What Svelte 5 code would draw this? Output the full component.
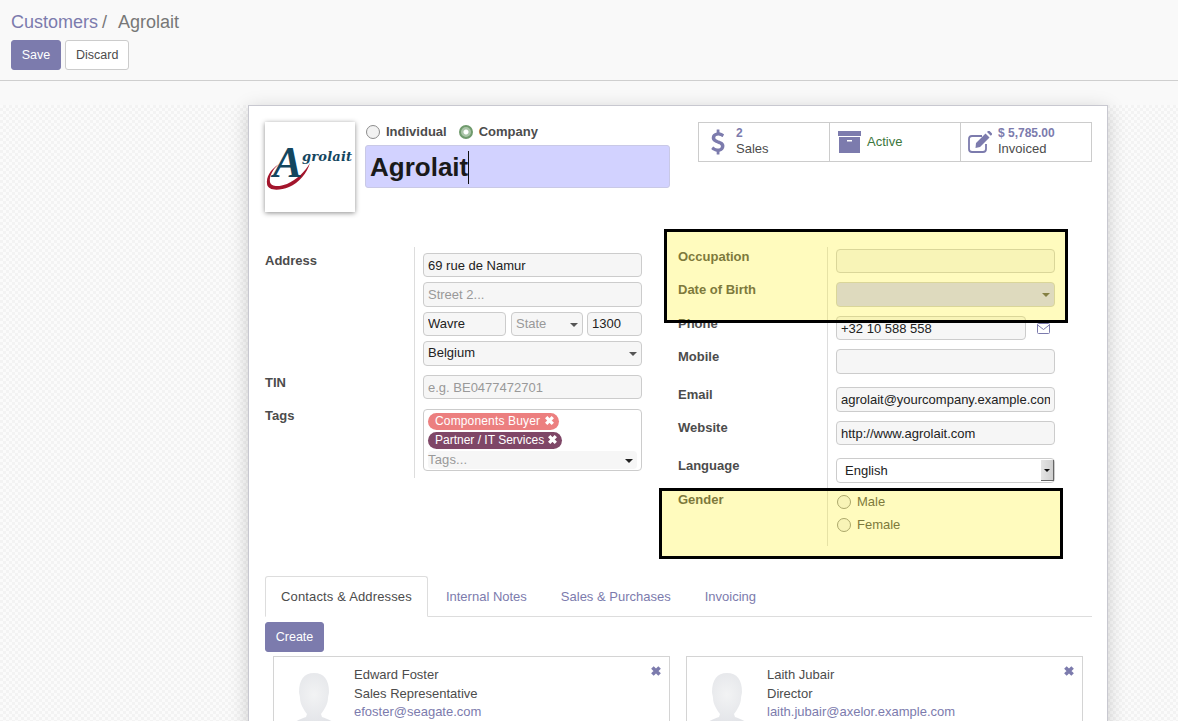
<script>
	const contacts = [
		{ name: 'Edward Foster', role: 'Sales Representative', email: 'efoster@seagate.com' },
		{ name: 'Laith Jubair', role: 'Director', email: 'laith.jubair@axelor.example.com' }
	];
	const tabs = ['Internal Notes', 'Sales & Purchases', 'Invoicing'];
</script>

<div class="page">
	<header class="panel">
		<div class="crumbs"><a href="#top">Customers</a><span class="sep">/</span><span>Agrolait</span></div>
		<div class="actions">
			<button class="btn primary save">Save</button>
			<button class="btn">Discard</button>
		</div>
	</header>
	<div class="gap"></div>

	<main class="backdrop">
		<section class="sheet">
			<div class="head">
				<div class="logo">
					<svg width="90" height="90" viewBox="0 0 90 90">
						<path d="M14 42C5 48 1 55 2 62c1 7 12 7 22 3 10-4 18-14 21-24-5 9-14 17-23 21-8 3-16 3-17-2-1-6 3-13 9-18z" fill="#a3152c" />
						<text x="8" y="55" class="logo-a">A</text>
						<text x="37" y="39" class="logo-t">grolait</text>
					</svg>
				</div>
				<div class="title">
					<div class="types">
						<label class="radio"><i></i>Individual</label>
						<label class="radio"><i class="on"></i>Company</label>
					</div>
					<div class="name">Agrolait<b></b></div>
				</div>
				<div class="stats">
					<div class="stat">
						<svg class="ico dollar" viewBox="400 0 1000 1792"><path d="M1362 1185q0 153-99.500 263.500t-258.500 136.500v175q0 14-9 23t-23 9h-135q-13 0-22.500-9.500t-9.500-22.500v-175q-66-9-127.500-31t-101.500-44.500-74-48-46.500-37.500-17.500-18q-17-21-2-41l103-135q7-10 23-12 15-2 24 9l2 2q113 99 243 125 37 8 74 8 81 0 142.500-43t61.500-122q0-28-15-53t-33.500-42-58.500-37.500-66-32-80-32.500q-39-16-61.500-25t-61.500-26.500-62.500-31-56.500-35.500-53.500-42.500-43.500-49-35.500-58-21-66.500-8.500-78q0-138 98-242t255-134v-180q0-13 9.500-22.500t22.500-9.500h135q14 0 23 9t9 23v176q57 6 110.500 23t87 33.500 63.500 37.500 39 29 15 14q17 18 5 38l-81 146q-8 15-23 16-14 3-27-7-3-3-14.500-12t-39-26.500-58.500-32-74.500-26-85.500-11.500q-95 0-155 43t-60 111q0 26 8.500 48t29.500 41.500 39.500 33 56 31 60.500 27 70 27.500q53 20 81 31.500t76 35 75.500 42.500 62 50 53 63.500 31.500 76.500 13 94z" /></svg>
						<div class="stat-text"><strong>2</strong><span>Sales</span></div>
					</div>
					<div class="stat">
						<svg class="ico box" viewBox="0 0 23 22"><path d="M0 0h23v5H0zM1 6h21v16H1z" /><rect x="9" y="9" width="5" height="1.500" fill="#fff" /></svg>
						<div class="stat-text active">Active</div>
					</div>
					<div class="stat">
						<svg class="ico edit" viewBox="0 0 24 22">
							<path d="M14 5H4a3 3 0 0 0-3 3v10a3 3 0 0 0 3 3h11a3 3 0 0 0 3-3v-5" fill="none" stroke="#7c7bad" stroke-width="1.800" />
							<path d="M8 12 17.500 2.500l4 4L12 16l-4.500 1zM19 1l1-1q.8-.6 1.600 0l2.200 2.200q.6.800 0 1.600l-1 1z" />
						</svg>
						<div class="stat-text"><strong>$ 5,785.00</strong><span>Invoiced</span></div>
					</div>
				</div>
			</div>

			<div class="group">
				<div class="col left">
					<div class="row">
						<div class="lbl">Address</div>
						<div class="val stack">
							<input value="69 rue de Namur" />
							<input placeholder="Street 2..." />
							<div class="city">
								<input class="c1" value="Wavre" />
								<div class="sel ph c2">State</div>
								<input class="c3" value="1300" />
							</div>
							<div class="sel">Belgium</div>
						</div>
					</div>
					<div class="row">
						<div class="lbl">TIN</div>
						<div class="val"><input placeholder="e.g. BE0477472701" /></div>
					</div>
					<div class="row last">
						<div class="lbl tight">Tags</div>
						<div class="val">
							<div class="tags">
								<span class="tag red">Components Buyer <svg viewBox="0 0 10 10"><path d="M2 2l6 6M8 2l-6 6" /></svg></span>
								<span class="tag plum">Partner / IT Services <svg viewBox="0 0 10 10"><path d="M2 2l6 6M8 2l-6 6" /></svg></span>
								<div class="sel tag-input ph">Tags...</div>
							</div>
						</div>
					</div>
				</div>

				<div class="col right">
					<div class="row">
						<div class="lbl">Occupation</div>
						<div class="val"><input /></div>
					</div>
					<div class="row">
						<div class="lbl">Date of Birth</div>
						<div class="val"><div class="sel dim"></div></div>
					</div>
					<div class="row">
						<div class="lbl">Phone</div>
						<div class="val phone">
							<input value="+32 10 588 558" />
							<svg class="mail" viewBox="0 0 13 11"><path d="M1.500.500h10a1 1 0 0 1 1 1v8a1 1 0 0 1-1 1h-10a1 1 0 0 1-1-1v-8a1 1 0 0 1 1-1zM.700 2 6.500 6.500 12.300 2" /></svg>
						</div>
					</div>
					<div class="row tall">
						<div class="lbl">Mobile</div>
						<div class="val"><input /></div>
					</div>
					<div class="row">
						<div class="lbl">Email</div>
						<div class="val"><input value="agrolait@yourcompany.example.com" /></div>
					</div>
					<div class="row site">
						<div class="lbl tight">Website</div>
						<div class="val"><input value="http://www.agrolait.com" /></div>
					</div>
					<div class="row">
						<div class="lbl">Language</div>
						<div class="val">
							<div class="native">English<span class="spin"></span></div>
						</div>
					</div>
					<div class="row last">
						<div class="lbl">Gender</div>
						<div class="val genders">
							<label class="radio"><i></i>Male</label>
							<label class="radio"><i></i>Female</label>
						</div>
					</div>
				</div>
			</div>

			<nav class="tabs">
				<a class="tab current" href="#top">Contacts &amp; Addresses</a>
				{#each tabs as t}
					<a class="tab" href="#top">{t}</a>
				{/each}
			</nav>
			<button class="btn primary create">Create</button>

			<div class="cards">
				{#each contacts as c}
					<article class="card">
						<svg class="avatar" viewBox="0 0 60 80">
							<defs>
								<radialGradient id="skin" cx="50%" cy="30%" r="70%">
									<stop offset="0" stop-color="#f2f3f4" />
									<stop offset="1" stop-color="#d8dae0" />
								</radialGradient>
							</defs>
							<path d="M30 8C40 8 45 15 45 27 45 29 44 31 44 33 44 39 40 45 37 49L38 52C46 55 58 58 60 80H0C2 58 14 55 22 52L23 49C20 45 16 39 16 33 16 31 15 29 15 27 15 15 20 8 30 8z" fill="url(#skin)" />
						</svg>
						<div class="who">
							<div>{c.name}</div>
							<div>{c.role}</div>
							<a href="#top">{c.email}</a>
						</div>
						<svg class="close" viewBox="0 0 10 10"><path d="M2 2l6 6M8 2l-6 6" /></svg>
					</article>
				{/each}
			</div>
		</section>
	</main>

	<div class="mark one"></div>
	<div class="mark two"></div>
</div>

<style>
	:global(body) {
		margin: 0;
		background: #f9f9f9;
	}
	.page {
		position: relative;
		height: 721px;
		overflow: hidden;
		font: 13px/18px 'Liberation Sans', Arial, sans-serif;
		color: #4c4c4c;
	}
	a {
		color: #7c7bad;
		text-decoration: none;
	}

	.panel {
		height: 81px;
		box-sizing: border-box;
		padding: 11px 11px 0;
		border-bottom: 1px solid #cfcfcf;
		background: #f9f9f9;
	}
	.crumbs {
		font-size: 18px;
		line-height: 22px;
		color: #777;
	}
	.sep {
		margin: 0 11px 0 4px;
	}
	.actions {
		display: flex;
		gap: 4px;
		margin-top: 7px;
	}
	.btn {
		height: 30px;
		padding: 0 10px;
		border: 1px solid #ccc;
		border-radius: 3px;
		background: #fff;
		font: 12.500px 'Liberation Sans', Arial, sans-serif;
		color: #4c4c4c;
	}
	.btn.primary {
		border-color: #7c7bad;
		background: #7c7bad;
		color: #fff;
	}
	.save {
		width: 50px;
		padding: 0;
	}
	.gap {
		height: 24px;
	}

	.backdrop {
		height: 616px;
		padding-left: 248px;
		background-color: #fbfbfb;
		background-image: conic-gradient(#f3f3f3 25%, #fbfbfb 0 50%, #f3f3f3 0 75%, #fbfbfb 0);
		background-size: 6px 6px;
	}
	.sheet {
		width: 860px;
		height: 700px;
		box-sizing: border-box;
		padding: 16px 15px 0 16px;
		border: 1px solid #c8c8d0;
		background: #fff;
		box-shadow: 0 4px 18px rgba(0, 0, 0, 0.18);
	}

	.head {
		display: flex;
		height: 125px;
		align-items: flex-start;
	}
	.logo {
		width: 90px;
		height: 90px;
		flex: none;
		margin-right: 10px;
		background: #fff;
		box-shadow: 0 1px 5px rgba(0, 0, 0, 0.45);
	}
	.logo-a {
		font: italic bold 44px 'Liberation Serif', serif;
		fill: #14465f;
	}
	.logo-t {
		font: italic bold 13px 'DejaVu Serif', serif;
		letter-spacing: 0.2px;
		fill: #14465f;
	}
	.title {
		width: 305px;
		flex: none;
	}
	.types {
		display: flex;
		gap: 12px;
		height: 23px;
		padding-left: 1px;
		font-weight: bold;
		padding-top: 1px;
		box-sizing: border-box;
	}
	.radio {
		display: flex;
		align-items: center;
		gap: 6px;
		height: 18px;
	}
	.radio i {
		box-sizing: border-box;
		width: 14px;
		height: 14px;
		border: 1px solid #8c8c8c;
		border-radius: 50%;
		background: #f2f2f2;
	}
	.radio i.on {
		border: 2px solid #6f9a6c;
		background: radial-gradient(circle, #fff 0 2px, #a9c4a7 3px);
	}
	.name {
		display: flex;
		height: 43px;
		box-sizing: border-box;
		align-items: center;
		padding: 1px 0 0 4px;
		border: 1px solid #c9c9e6;
		border-radius: 3px;
		background: #d2d2ff;
		font-size: 26px;
		font-weight: bold;
		color: #1a1a1a;
	}
	.name b {
		width: 1px;
		height: 33px;
		background: #111;
	}
	.stats {
		display: flex;
		margin-left: auto;
		height: 40px;
		box-sizing: border-box;
		border: 1px solid #ccc;
	}
	.stat {
		display: flex;
		align-items: center;
		box-sizing: border-box;
		width: 131px;
		padding-left: 8px;
		border-left: 1px solid #ccc;
	}
	.stat:first-child {
		border-left: 0;
		width: 130px;
	}
	.stat:last-child {
		padding-left: 7px;
	}
	.ico {
		fill: #7c7bad;
		flex: none;
	}
	.dollar {
		width: 14px;
		height: 26px;
		margin: 0 11px 0 4px;
	}
	.box {
		width: 23px;
		height: 22px;
		margin: -1px 6px 0 0;
	}
	.edit {
		width: 24px;
		height: 22px;
		margin-right: 6px;
	}
	.stat-text {
		display: flex;
		flex-direction: column;
		line-height: 15px;
		margin-top: -2px;
	}
	.stat-text strong {
		font-size: 12px;
		color: #7c7bad;
	}
	.active {
		color: #3c763d;
	}

	.group {
		display: grid;
		grid-template-columns: 377px 377px;
		column-gap: 36px;
	}
	.row {
		display: grid;
		grid-template-columns: 149px 1fr;
	}
	.lbl {
		font-weight: bold;
		line-height: 14px;
		padding-top: 1px;
	}
	.lbl.tight {
		padding-top: 0;
	}
	.val {
		min-width: 0;
		padding: 0 0 9.100px 8px;
		border-left: 1px solid #ddd;
	}
	.left .row:first-child > .val {
		padding-top: 6px;
		padding-bottom: 9.400px;
	}
	.left .row:first-child > .lbl {
		padding-top: 7px;
	}
	.left .row:nth-child(2) > .val {
		padding-bottom: 9.600px;
	}
	.right .row:first-child > .val {
		padding-top: 2px;
	}
	.right .row:first-child > .lbl {
		padding-top: 3px;
	}
	.tall .val {
		padding-bottom: 13.600px;
	}
	.site .val {
		padding-bottom: 12.600px;
	}
	input,
	.sel {
		display: block;
		box-sizing: border-box;
		width: 100%;
		height: 24.400px;
		padding: 0 4px;
		border: 1px solid #ccc;
		border-radius: 4px;
		outline: 0;
		background: #f6f6f6;
		font: 13px/22px 'Liberation Sans', Arial, sans-serif;
		color: #222;
	}
	input::placeholder,
	.ph {
		color: #999;
	}
	.stack {
		display: flex;
		flex-direction: column;
		gap: 5px;
	}
	.city {
		display: flex;
		gap: 5px;
	}
	.c1 {
		width: 83px;
	}
	.c2 {
		width: 72px;
	}
	.c3 {
		width: 55px;
		margin-left: -1px;
	}
	.sel {
		position: relative;
	}
	.sel::after {
		content: '';
		position: absolute;
		right: 4px;
		top: 10px;
		border: 4px solid transparent;
		border-top-color: #555;
		border-bottom: 0;
	}
	.dim {
		background: #d2d2ff;
	}
	.last .val {
		padding-bottom: 7px;
	}
	.tags {
		box-sizing: border-box;
		height: 62px;
		padding: 3px 4px;
		border: 1px solid #ccc;
		border-radius: 4px;
		font-size: 12px;
		letter-spacing: 0.15px;
	}
	.tag {
		display: table;
		height: 17px;
		margin-bottom: 2px;
		padding: 0 4px 0 7px;
		border-radius: 9px;
		line-height: 17px;
		color: #fff;
	}
	.tag svg {
		width: 11px;
		height: 11px;
		vertical-align: -1px;
		fill: none;
		stroke: #fff;
		stroke-width: 3;
	}
	.red {
		background: #ec7f7f;
	}
	.plum {
		background: #7f4767;
		letter-spacing: 0;
	}
	.tag-input {
		height: 18px;
		padding: 0;
		border: 0;
		line-height: 18px;
		font-size: 13px;
	}
	.tag-input::after {
		top: 8px;
		border-top-color: #222;
	}
	.phone {
		display: flex;
		align-items: center;
		gap: 11px;
	}
	.phone input {
		width: 190px;
		flex: none;
	}
	.mail {
		width: 13px;
		height: 11px;
		fill: none;
		stroke: #7c7bad;
	}
	.native {
		position: relative;
		box-sizing: border-box;
		height: 25px;
		padding-left: 8px;
		border: 1px solid #ccc;
		border-radius: 4px;
		background: #fff;
		font-size: 13px;
		line-height: 24px;
		color: #222;
	}
	.spin {
		position: absolute;
		top: 1px;
		right: 0;
		width: 13px;
		height: 21px;
		background: linear-gradient(90deg, #e4e4e4, #cfcfcf);
		border-right: 1px solid #666;
		border-bottom: 1px solid #666;
		box-sizing: border-box;
	}
	.spin::after {
		content: '';
		position: absolute;
		left: 3px;
		top: 9px;
		border: 3px solid transparent;
		border-top-color: #111;
		border-bottom: 0;
	}
	.last .genders {
		padding: 1px 0 7px 9px;
	}
	.genders .radio {
		margin-bottom: 5px;
	}
	.genders i {
		background: #f6f6f6;
	}

	.tabs {
		display: flex;
		height: 41px;
		margin-top: 30px;
		border-bottom: 1px solid #ddd;
		box-sizing: border-box;
	}
	.tab {
		height: 41px;
		box-sizing: border-box;
		margin-right: 2px;
		padding: 11px 15px;
		border: 1px solid transparent;
		border-radius: 3px 3px 0 0;
	}
	.tab.current {
		border-color: #ddd #ddd #fff;
		background: #fff;
		color: #4c4c4c;
		letter-spacing: 0.15px;
	}
	.create {
		display: block;
		margin-top: 5px;
		width: 59px;
		padding: 0;
	}
	.cards {
		display: grid;
		grid-template-columns: 397px 397px;
		column-gap: 16px;
		margin: 4px 0 0 8px;
	}
	.card {
		display: flex;
		height: 90px;
		box-sizing: border-box;
		padding: 9px 7px 0 10px;
		border: 1px solid #d4d4d4;
	}
	.avatar {
		width: 60px;
		height: 80px;
		flex: none;
		margin: -1px 10px 0 0;
	}
	.who {
		flex: 1;
		line-height: 18.500px;
	}
	.who a {
		display: block;
	}
	.close {
		width: 12px;
		height: 12px;
		margin-top: -1px;
		fill: none;
		stroke: #7c7bad;
		stroke-width: 3;
	}

	.mark {
		position: absolute;
		box-sizing: border-box;
		border: 3px solid #000;
		background: rgba(255, 240, 20, 0.28);
	}
	.one {
		left: 664px;
		top: 229px;
		width: 404px;
		height: 94px;
	}
	.two {
		left: 659px;
		top: 488px;
		width: 404px;
		height: 71px;
	}
</style>
